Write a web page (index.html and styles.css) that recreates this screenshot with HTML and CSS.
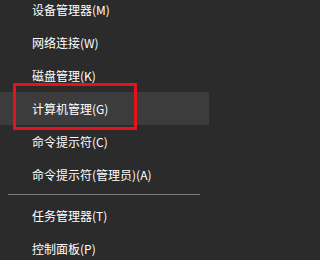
FILE: index.html
```html
<!DOCTYPE html>
<html lang="zh-CN">
<head>
<meta charset="utf-8">
<link rel="stylesheet" href="styles.css">
</head>
<body>
<div class="menu">
  <div class="item">设备管理器(M)</div>
  <div class="item">网络连接(W)</div>
  <div class="item">磁盘管理(K)</div>
  <div class="item active">计算机管理(G)</div>
  <div class="item">命令提示符(C)</div>
  <div class="item">命令提示符(管理员)(A)</div>
  <div class="sep"></div>
  <div class="item">任务管理器(T)</div>
  <div class="item">控制面板(P)</div>
  <div class="mark"></div>
</div>
</body>
</html>
```
FILE: styles.css
```css
html, body {
  margin: 0;
  padding: 0;
  background: #2b2b2b;
  overflow: hidden;
}
body {
  width: 209px;
  height: 260px;
  font-family: "Noto Sans CJK SC", "Noto Sans", sans-serif;
  font-size: 12px;
  color: #ffffff;
}
.menu {
  position: relative;
  margin-top: -7px;
  display: flex;
  flex-direction: column;
}
.item {
  height: 33px;
  line-height: 33px;
  padding-left: 32px;
  white-space: nowrap;
}
.item.active {
  background: #3c3c3c;
}
.sep {
  height: 1px;
  background: #7a7a7a;
  margin: 3px 9px 4px 8px;
}
.mark {
  position: absolute;
  left: 13px;
  top: 90px;
  width: 118px;
  height: 41px;
  border: 3px solid #e5121b;
}
```
